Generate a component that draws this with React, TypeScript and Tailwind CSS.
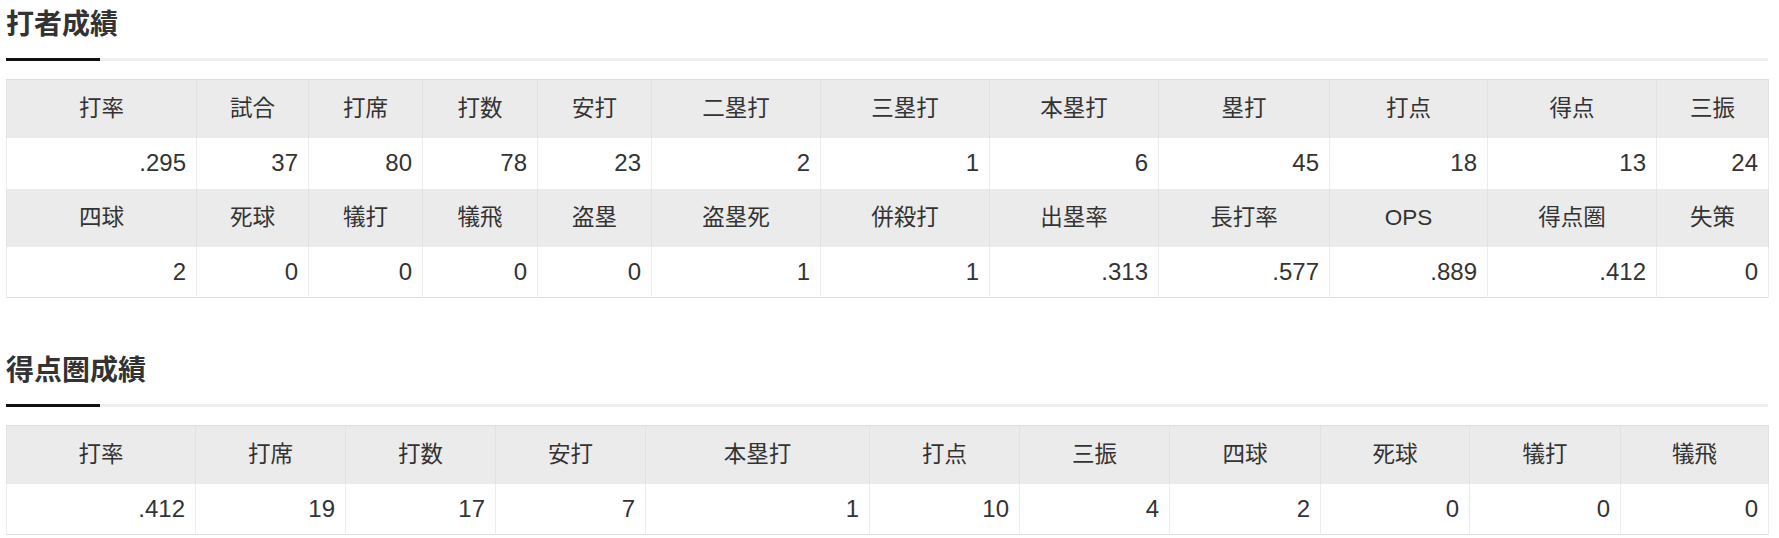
import React from 'react';

type Cell = { label: string; value: string };

// column widths measured off the reference (px)
const battingCols = [
  'w-[190px]', 'w-[112px]', 'w-[114px]', 'w-[115px]', 'w-[114px]', 'w-[169px]',
  'w-[169px]', 'w-[169px]', 'w-[171px]', 'w-[158px]', 'w-[169px]', 'w-[112px]',
];

const scoringCols = [
  'w-[189px]', 'w-[150px]', 'w-[150px]', 'w-[150px]', 'w-[224px]', 'w-[150px]',
  'w-[150px]', 'w-[151px]', 'w-[149px]', 'w-[151px]', 'w-[148px]',
];

const battingRows: Cell[][] = [
  [
    { label: '打率', value: '.295' },
    { label: '試合', value: '37' },
    { label: '打席', value: '80' },
    { label: '打数', value: '78' },
    { label: '安打', value: '23' },
    { label: '二塁打', value: '2' },
    { label: '三塁打', value: '1' },
    { label: '本塁打', value: '6' },
    { label: '塁打', value: '45' },
    { label: '打点', value: '18' },
    { label: '得点', value: '13' },
    { label: '三振', value: '24' },
  ],
  [
    { label: '四球', value: '2' },
    { label: '死球', value: '0' },
    { label: '犠打', value: '0' },
    { label: '犠飛', value: '0' },
    { label: '盗塁', value: '0' },
    { label: '盗塁死', value: '1' },
    { label: '併殺打', value: '1' },
    { label: '出塁率', value: '.313' },
    { label: '長打率', value: '.577' },
    { label: 'OPS', value: '.889' },
    { label: '得点圏', value: '.412' },
    { label: '失策', value: '0' },
  ],
];

const scoringRows: Cell[][] = [
  [
    { label: '打率', value: '.412' },
    { label: '打席', value: '19' },
    { label: '打数', value: '17' },
    { label: '安打', value: '7' },
    { label: '本塁打', value: '1' },
    { label: '打点', value: '10' },
    { label: '三振', value: '4' },
    { label: '四球', value: '2' },
    { label: '死球', value: '0' },
    { label: '犠打', value: '0' },
    { label: '犠飛', value: '0' },
  ],
];

const SectionTitle: React.FC<{ title: string }> = ({ title }) => (
  <div>
    <h2 className="pt-[3px] text-[28px] leading-[39px] font-bold text-[#333] font-['Noto_Sans_CJK_JP',sans-serif]">
      {title}
    </h2>
    <div className="mt-[16px] flex h-[3px] bg-[#eeeeee]">
      <div className="w-[94px] h-full bg-[#111]" />
    </div>
  </div>
);

const StatsTable: React.FC<{ cols: string[]; rows: Cell[][] }> = ({ cols, rows }) => (
  <table className="mt-[18px] w-full table-fixed border-collapse border border-[#dddddd] text-[#333] font-['Liberation_Sans','Noto_Sans_CJK_JP',sans-serif]">
    <colgroup>
      {cols.map((c, i) => (
        <col key={i} className={c} />
      ))}
    </colgroup>
    <tbody>
      {rows.map((row, r) => (
        <React.Fragment key={r}>
          <tr className="bg-[#ebebeb]">
            {row.map((cell, i) => (
              <th key={i} className="h-[58px] p-0 text-[22.5px] font-normal text-center border-x border-[#e2e2e2]">
                {cell.label}
              </th>
            ))}
          </tr>
          <tr className="bg-white">
            {row.map((cell, i) => (
              <td key={i} className="h-[51px] py-0 pr-[10px] text-[24px] text-right border-x border-[#ececec]">
                {cell.value}
              </td>
            ))}
          </tr>
        </React.Fragment>
      ))}
    </tbody>
  </table>
);

const App: React.FC = () => {
  return (
    <div className="min-h-screen bg-white pl-[6px] pr-[11px]">
      <section>
        <SectionTitle title="打者成績" />
        <StatsTable cols={battingCols} rows={battingRows} />
      </section>
      <section className="mt-[48px]">
        <SectionTitle title="得点圏成績" />
        <StatsTable cols={scoringCols} rows={scoringRows} />
      </section>
    </div>
  );
};

export default App;
